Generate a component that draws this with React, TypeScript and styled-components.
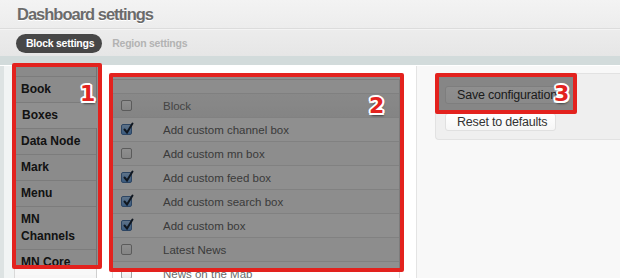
import React from 'react';
import styled, { createGlobalStyle } from 'styled-components';

const GlobalStyle = createGlobalStyle`
	html, body {
		margin: 0;
		padding: 0;
		background: #ffffff;
	}
	body {
		font-family: "Liberation Sans", Arial, Helvetica, sans-serif;
		width: 620px;
		height: 278px;
		overflow: hidden;
	}
`

const Page = styled.div`
	position: relative;
	width: 620px;
	height: 278px;
	overflow: hidden;
	display: flex;
	flex-direction: column;
`

const Header = styled.header`
	flex-shrink: 0;
	background: linear-gradient(#f3f3f3, #e6e6e6);
	height: 56px;
	display: flex;
	flex-direction: column;
`

const TitleBar = styled.div`
	height: 29px;
	padding-left: 17px;
	box-sizing: border-box;
	border-bottom: 1px solid #dcdcdc;
	box-shadow: 0 1px 0 #f4f4f4;
	display: flex;
	align-items: center;
`

const Title = styled.h1`
	margin: 0;
	font-size: 16.5px;
	font-weight: bold;
	letter-spacing: -1px;
	color: #6b6b6b;
	text-shadow: 0 1px 0 #ffffff;
`

const TabRow = styled.nav`
	display: flex;
	align-items: center;
	gap: 10px;
	padding: 5px 0 0 16px;
`

const Tab = styled.span<{ $active?: boolean }>`
	font-size: 10.5px;
	font-weight: bold;
	height: 19px;
	line-height: 19px;
	border-radius: 10px;
	letter-spacing: -0.25px;
	color: ${p => (p.$active ? '#ffffff' : '#b3b3b3')};
	background: ${p => (p.$active ? '#474747' : 'transparent')};
	padding: ${p => (p.$active ? '0 8px 0 10px' : '0')};
`

const Stripe = styled.div`
	flex-shrink: 0;
	height: 9px;
	background: #d2dbdb;
	border-bottom: 1px solid #ffffff;
`

const Body = styled.div`
	flex: 1;
	min-height: 0;
	display: flex;
	background: #ffffff;
`

const Gutter = styled.div`
	width: 14px;
	background: linear-gradient(to right, #dde3e3 4px, #f1f4f4 4px);
`

const VTabs = styled.ul`
	list-style: none;
	margin: 1px 0 0;
	padding: 9px 0 0;
	width: 83px;
	background: #f6f6f6;
	border-right: 1px solid #cfcfcf;
	border-left: 1px solid #d9d9d9;
	box-sizing: border-box;
`

const VTab = styled.li<{ $active?: boolean }>`
	font-size: 12px;
	font-weight: bold;
	color: #222222;
	line-height: 17px;
	padding: ${p => (p.$active ? '4px 6px 4px 7px' : '4px 6px 4px 6px')};
	border-top: 1px solid #dddddd;
	background: ${p => (p.$active ? '#ffffff' : '#f8f8f8')};
	margin-right: ${p => (p.$active ? '-1px' : '0')};
`

const Main = styled.main`
	width: 319px;
	padding: 13px 16px 0 15px;
	box-sizing: border-box;
`

const Table = styled.div`
	border: 1px solid #dddddd;
	background: #ffffff;
`

const Caption = styled.div`
	height: 13px;
	background: #fbfbfb;
	border-bottom: 1px solid #e4e4e4;
`

const Row = styled.div<{ $head?: boolean; $odd?: boolean }>`
	display: flex;
	align-items: center;
	height: 23px;
	border-bottom: 1px solid #e6e6e6;
	background: ${p => (p.$head ? 'linear-gradient(#f4f4f4, #ececec)' : p.$odd ? '#fbfbfb' : '#ffffff')};
	font-size: 11.5px;
	color: ${p => (p.$head ? '#7a7a7a' : '#6a6a6a')};
`

const CheckCell = styled.div`
	width: 50px;
	padding-left: 8px;
	box-sizing: border-box;
	display: flex;
	align-items: center;
`

const Box = styled.span<{ $checked?: boolean }>`
	width: 11px;
	height: 11px;
	box-sizing: border-box;
	border: 1px solid ${p => (p.$checked ? '#4f7bb0' : '#a3a3a3')};
	border-radius: 2px;
	background: ${p => (p.$checked ? 'linear-gradient(#a9cdf4, #6aa3e2)' : 'linear-gradient(#ffffff, #ececec)')};
	position: relative;
	display: inline-block;

	svg {
		position: absolute;
		left: 0;
		top: -3px;
	}
`

const Aside = styled.aside`
	flex: 1;
	border-left: 1px solid #e4e4e4;
	background: #f8f8f8;
	padding: 7px 0 0 18px;
`

const Actions = styled.div`
	background: #efefef;
	border: 1px solid #e2e2e2;
	border-right: none;
	border-radius: 4px 0 0 4px;
	height: 67px;
	padding: 12px 0 0 9px;
	box-sizing: border-box;
	display: flex;
	flex-direction: column;
	align-items: flex-start;
	gap: 9px;
`

const Button = styled.button<{ $w: number }>`
	font-family: "Liberation Sans", Arial, sans-serif;
	font-size: 12.5px;
	letter-spacing: -0.2px;
	white-space: nowrap;
	color: #333333;
	width: ${p => p.$w}px;
	height: 18px;
	padding: 0 0 0 11px;
	text-align: left;
	border: 1px solid #e0e0e0;
	border-radius: 3px;
	background: linear-gradient(#ffffff, #f6f6f6);
	line-height: 16px;
`

const Highlight = styled.div`
	position: absolute;
	border: 4px solid #e3221e;
	border-radius: 2px;
	background: rgba(0, 0, 0, 0.44);
	box-sizing: border-box;
	pointer-events: none;
`

const Num = styled.span`
	position: absolute;
	font-family: "DejaVu Sans", sans-serif;
	font-weight: bold;
	font-size: 22px;
	line-height: 22px;
	color: #e3221e;
	text-shadow:
		-2px 0 0 #fff, 2px 0 0 #fff, 0 -2px 0 #fff, 0 2px 0 #fff,
		-1.5px -1.5px 0 #fff, 1.5px -1.5px 0 #fff, -1.5px 1.5px 0 #fff, 1.5px 1.5px 0 #fff,
		1px 3px 2px rgba(0, 0, 0, 0.5);
`

const tabs = ['Book', 'Boxes', 'Data Node', 'Mark', 'Menu', 'MN Channels', 'MN Core']

const blocks = [
	{ label: 'Add custom channel box', checked: true },
	{ label: 'Add custom mn box', checked: false },
	{ label: 'Add custom feed box', checked: true },
	{ label: 'Add custom search box', checked: true },
	{ label: 'Add custom box', checked: true },
	{ label: 'Latest News', checked: false },
	{ label: 'News on the Map', checked: false },
]

const Check = ({ checked }: { checked?: boolean }) => (
	<Box $checked={checked}>
		{checked && (
			<svg width="13" height="13" viewBox="0 0 13 13">
				<path d="M2.5 7.5 L5 10.5 L10.5 1.5" fill="none" stroke="#1d2a3a" strokeWidth="2" strokeLinecap="round" />
			</svg>
		)}
	</Box>
)

export default function App() {
	return (
		<>
			<GlobalStyle />
			<Page>
				<Header>
					<TitleBar>
						<Title>Dashboard settings</Title>
					</TitleBar>
					<TabRow>
						<Tab $active>Block settings</Tab>
						<Tab>Region settings</Tab>
					</TabRow>
				</Header>
				<Stripe />
				<Body>
					<Gutter />
					<VTabs>
						{tabs.map((t, i) => (
							<VTab key={i} $active={t === 'Boxes'}>{t}</VTab>
						))}
					</VTabs>
					<Main>
						<Table>
							<Caption />
							<Row $head>
								<CheckCell><Check /></CheckCell>
								Block
							</Row>
							{blocks.map((b, i) => (
								<Row key={i} $odd={i % 2 === 1}>
									<CheckCell><Check checked={b.checked} /></CheckCell>
									{b.label}
								</Row>
							))}
						</Table>
					</Main>
					<Aside>
						<Actions>
							<Button $w={116}>Save configuration</Button>
							<Button $w={111}>Reset to defaults</Button>
						</Actions>
					</Aside>
				</Body>

				<Highlight style={{ left: 12, top: 63, width: 90, height: 206 }}>
					<Num style={{ left: 64, top: 16 }}>1</Num>
				</Highlight>
				<Highlight style={{ left: 109, top: 73, width: 295, height: 199 }}>
					<Num style={{ left: 256, top: 18 }}>2</Num>
				</Highlight>
				<Highlight style={{ left: 435, top: 73, width: 142, height: 41 }}>
					<Num style={{ left: 115, top: 6 }}>3</Num>
				</Highlight>
			</Page>
		</>
	)
}
